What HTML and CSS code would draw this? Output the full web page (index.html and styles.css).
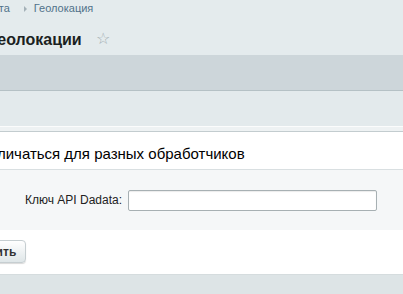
FILE: index.html
```html
<!DOCTYPE html>
<html lang="ru">
<head>
    <meta charset="UTF-8">
    <title>Геолокация</title>
    <link rel="stylesheet" href="styles.css">
</head>
<body>
    <div class="page">
        <div class="top">
            <div class="breadcrumbs">
                <a href="#">Настройки продукта</a>
                <span class="sep"></span>
                <a href="#">Геолокация</a>
            </div>
            <h1 class="title">Геолокации <span class="star">&#9734;</span></h1>
        </div>
        <div class="toolbar"></div>
        <div class="context"></div>
        <div class="panel">
            <div class="panel-head">Настройки могут отличаться для разных обработчиков</div>
            <div class="field-row">
                <label class="field-label" for="dadata">Ключ API Dadata:</label>
                <input class="field-input" type="text" id="dadata">
            </div>
            <div class="buttons">
                <button class="btn" type="button">Сохранить</button>
            </div>
        </div>
        <div class="footer"></div>
    </div>
</body>
</html>
```

FILE: styles.css
```css
html, body {
    margin: 0;
    padding: 0;
    overflow: hidden;
}
body {
    font-family: "Liberation Sans", Arial, sans-serif;
    background: #dde4e6;
    width: 403px;
    height: 294px;
}
.page {
    margin-left: -150px;
    width: 553px;
}
.top {
    background: #e4ebed;
    height: 55px;
    box-sizing: border-box;
    padding-top: 2px;
}
.breadcrumbs {
    font-size: 11px;
    line-height: 13px;
    padding-left: 57px;
    display: flex;
    align-items: center;
}
.breadcrumbs a {
    color: #51728a;
    text-decoration: none;
}
.sep {
    width: 0;
    height: 0;
    border-left: 3px solid #a4b1b8;
    border-top: 3px solid transparent;
    border-bottom: 3px solid transparent;
    margin: 0 7px 0 14px;
}
.title {
    margin: 13px 0 0;
    padding-left: 139px;
    font-size: 16px;
    line-height: 22px;
    font-weight: bold;
    color: #1b1f21;
}
.star {
    font-weight: normal;
    font-size: 16px;
    color: #a3aeb2;
    margin-left: 10px;
    vertical-align: 1px;
}
.toolbar {
    height: 35px;
    background: #cdd6da;
    border-bottom: 1px solid #b5c1c5;
}
.context {
    height: 35px;
    background: #e3eaec;
    border-bottom: 1px solid #fbfcfc;
}
.panel {
    background: #fff;
    border-top: 4px solid #eef2f3;
}
.panel-head {
    height: 39px;
    box-sizing: border-box;
    padding: 13px 0 0 12px;
    font-size: 15px;
    color: #000;
    border-bottom: 1px solid #d9dfe1;
    border-top: 1px solid #c3cccf;
}
.field-row {
    background: #f5f7f8;
    height: 60px;
    display: flex;
    align-items: center;
}
.field-label {
    width: 272px;
    text-align: right;
    font-size: 12px;
    color: #222;
    padding-right: 6px;
}
.field-input {
    width: 249px;
    height: 21px;
    box-sizing: border-box;
    border: 1px solid #a7b0b3;
    border-radius: 2px;
    box-shadow: inset 0 1px 1px rgba(0, 0, 0, 0.08);
    background: #fff;
}
.buttons {
    height: 45px;
    box-sizing: border-box;
    padding: 10px 0 0 92px;
    border-bottom: 1px solid #d5dcde;
}
.btn {
    font-family: inherit;
    font-size: 12px;
    font-weight: bold;
    color: #333;
    height: 23px;
    padding: 0 9px;
    border: 1px solid #c6ced1;
    border-radius: 4px;
    background: linear-gradient(#ffffff, #dfe6e8);
    box-shadow: 0 1px 1px rgba(0, 0, 0, 0.15);
}
.footer {
    height: 18px;
    background: #dde4e6;
}
```
